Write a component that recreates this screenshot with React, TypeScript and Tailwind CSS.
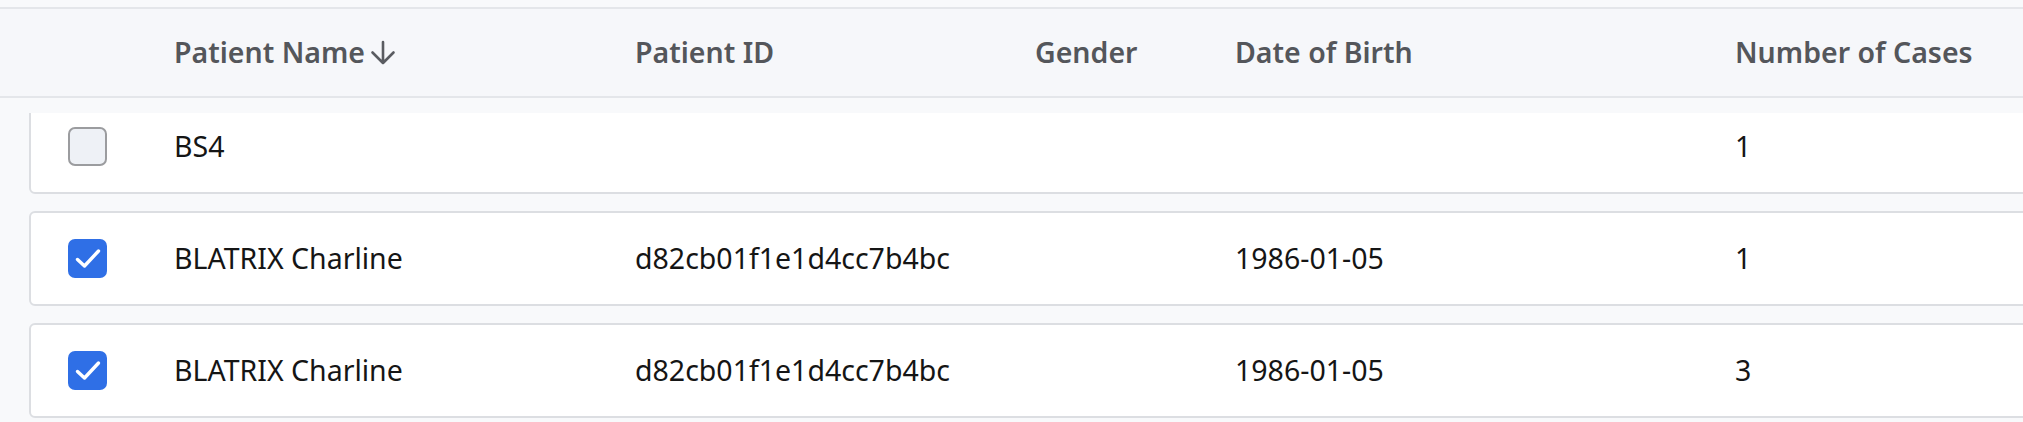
type Patient = {
  name: string;
  id: string;
  gender: string;
  dob: string;
  cases: number;
  checked: boolean;
};

const patients: Patient[] = [
  { name: "BS4", id: "", gender: "", dob: "", cases: 1, checked: false },
  { name: "BLATRIX Charline", id: "d82cb01f1e1d4cc7b4bc", gender: "", dob: "1986-01-05", cases: 1, checked: true },
  { name: "BLATRIX Charline", id: "d82cb01f1e1d4cc7b4bc", gender: "", dob: "1986-01-05", cases: 3, checked: true },
];

const cols = "grid grid-cols-[106px_461px_400px_200px_500px_1fr] items-center";

function Checkbox({ checked }: { checked: boolean }) {
  if (!checked) {
    return <div className="h-[39px] w-[39px] rounded-[7px] border-2 border-[#9b9c9f] bg-[#eef1f6]" />;
  }
  return (
    <div className="h-[39px] w-[39px] rounded-[7px] bg-[#2f6fe6]">
      <svg width="39" height="39" viewBox="0 0 39 39" fill="none" aria-hidden="true">
        <path d="M9.5 20.5l7 6.5L30.5 12" stroke="white" strokeWidth="3.4" strokeLinecap="round" strokeLinejoin="round" />
      </svg>
    </div>
  );
}

function SortArrow() {
  return (
    <svg width="28" height="26" viewBox="0 0 28 26" fill="none" aria-hidden="true">
      <path d="M14 2v21M3.5 12.5L14 23l10.5-10.5" stroke="#5a5c61" strokeWidth="2.6" strokeLinecap="round" strokeLinejoin="round" />
    </svg>
  );
}

export default function App() {
  return (
    <div className="h-[422px] w-full overflow-hidden bg-[#f8f9fb] pt-[7px] font-['Noto_Sans','Open_Sans',sans-serif] text-[28.5px]">
      <div className={`${cols} h-[91px] border-y-2 border-[#e4e6ea] bg-[#f6f7fa] pl-[68px] font-semibold text-[#54565b]`}>
        <div />
        <div className="flex items-center gap-[4px]">
          Patient Name
          <SortArrow />
        </div>
        <div>Patient ID</div>
        <div>Gender</div>
        <div>Date of Birth</div>
        <div>Number of Cases</div>
      </div>

      <div className="mt-[15px] flex flex-col gap-[17px] overflow-hidden pl-[29px]">
        {patients.map((p, i) => (
          <div
            key={i}
            className={`${cols} h-[95px] w-[2100px] shrink-0 rounded-[6px] border-2 border-[#dcdee2] bg-white pl-[37px] text-[#151515] ${i === 0 ? "mt-[-14px]" : ""}`}
          >
            <Checkbox checked={p.checked} />
            <div>{p.name}</div>
            <div>{p.id}</div>
            <div>{p.gender}</div>
            <div>{p.dob}</div>
            <div>{p.cases}</div>
          </div>
        ))}
      </div>
    </div>
  );
}
